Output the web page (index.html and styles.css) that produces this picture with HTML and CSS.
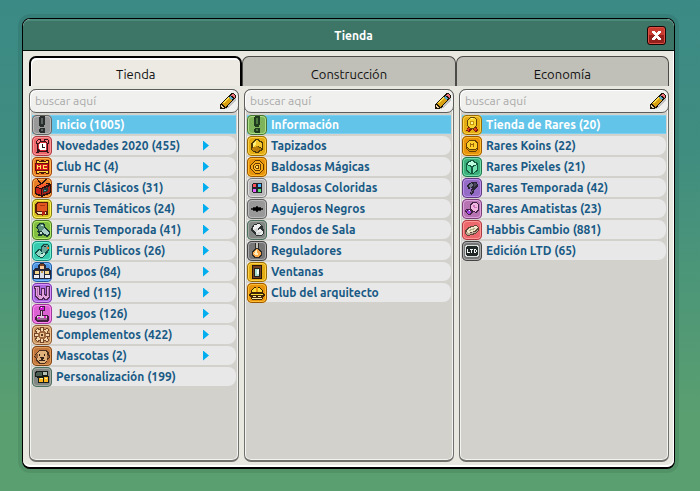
FILE: index.html
```html
<!DOCTYPE html>
<html lang="es">
<head>
<meta charset="utf-8">
<title>Tienda</title>
<meta name="viewport" content="width=device-width, initial-scale=1">
<link rel="stylesheet" href="styles.css">
</head>
<body>
<svg class="sprites" aria-hidden="true">
  <symbol id="bang" viewBox="0 0 20 20"><path d="M8 1h4l1 1v7l-1 3H8L7 9V2zM8 13h4l1 1v3l-1 1H8l-1-1v-3z" fill="var(--ink)"/><path d="M9 3h2v6H9zM9 14h2v2H9z" fill="var(--ink-soft)"/></symbol>
  <symbol id="clock" viewBox="0 0 20 20"><path d="M4 5l2-2h3v2h3V3h3l2 2v3h-1v7l1 2h-2l-1-1H7l-1 1H4l1-2V8H4z" fill="#301417"/><path d="M5 5l1-1h2v1L6 7H5zM13 4h2l1 1v2h-1l-2-2z" fill="#ff7a80"/><path d="M8 6h5l2 2v5l-2 2H8l-2-2V8z" fill="#d22b38"/><path d="M8 7h5l1 1v5l-1 1H8l-1-1V8z" fill="#fff"/><path d="M10 8h1v3h2v1h-3z" fill="#222"/></symbol>
  <symbol id="hc" viewBox="0 0 20 20"><path d="M4 3h3v1h2V3h3v1h2V3h3v4h-1v6h1v4h-3v-1h-2v1H9v-1H7v1H4v-4h1V7H4z" fill="#4b1808"/><path d="M5 4h2v1h7V4h2v2H5zM5 14h11v2h-2v-1H7v1H5z" fill="#ffd83e"/><path d="M3 6h14v8H3z" fill="#6f0910"/><path d="M4 7h12v6H4z" fill="#d3181c"/><path d="M5 8h1v1h2V8h1v4H8v-2H6v2H5zM11 8h4v1h-3v2h3v1h-4z" fill="#ffe65a"/></symbol>
  <symbol id="tv" viewBox="0 0 20 20"><path d="M5 1h1l3 4 5-4h1l-4 5 6-1 2 2v8l-9 4-7-3V9l5-3z" fill="#29100c"/><path d="M4 9l6-3 7 0-8 4z" fill="#f8582e"/><path d="M4 10l5 1v6l-5-2z" fill="#c91f1a"/><path d="M10 11l8-3v6l-8 3z" fill="#a3201a"/><path d="M11 11l5-2v4l-5 2z" fill="#1c3b3a"/><path d="M12 12h2v1h-2z" fill="#56aaa0"/></symbol>
  <symbol id="book" viewBox="0 0 20 20"><path d="M5 3h10l1 1v11l-1 1H5l-2-2V6z" fill="#551e0b"/><path d="M6 4h9v8H5V6z" fill="#e2561f"/><path d="M8 6h5v1H8z" fill="#a83510"/><path d="M5 13h9v2H6z" fill="#f3e5b3"/><path d="M10 12h3v5l-1-1-2 1z" fill="#b02014"/></symbol>
  <symbol id="bird" viewBox="0 0 20 20"><path d="M4 8l2-4 2-1h3l2 2v2l3 2 2 3v3l-3 2-4-2-3 1H6l1-3-3-1 2-2z" fill="#183832"/><path d="M6 6l2-2h2l2 2v2l-3 3-2 0z" fill="#5f8f7d"/><path d="M10 10l2-2 4 3 1 2-2 2-4-2z" fill="#a9cfc8"/><path d="M8 12l2 0v2H8z" fill="#c6dfcf"/><path d="M9 5h2v1H9z" fill="#cef0e3"/></symbol>
  <symbol id="bird-left" viewBox="0 0 20 20"><path d="M3 11l4-3 2 0V6l2-3h4l2 2v4l-1 3-3 2-3 3-4-1-3-3z" fill="#134b45"/><path d="M4 12l3-3 3 2-2 4-2 0z" fill="#8fd4c1"/><path d="M10 7l2-3h3l1 1v3l-3 4-3 0z" fill="#66a99b"/><path d="M8 14l4-2 1 1-3 3H8z" fill="#c2eadd"/><path d="M12 5h2v1h-2z" fill="#1d272b"/><path d="M15 6h2v2h-2z" fill="#f16b31"/></symbol>
  <symbol id="group" viewBox="0 0 20 20"><path d="M8 1h4l2 3v2h3l2 3v8H1V9l2-3h3V4z" fill="#25273b"/><path d="M8 4h4v3H8z" fill="#ffca99"/><path d="M8 2h4v2H8z" fill="#7b4020"/><path d="M8 9h4v7H8z" fill="#d9dde8"/><path d="M3 9h4v3H3zM13 9h4v3h-4z" fill="#f5d88c"/><path d="M2 13h5v3H2zM13 13h5v3h-5z" fill="#eef0f5"/><path d="M9 9h2v2H9z" fill="#c79d4b"/></symbol>
  <symbol id="wired" viewBox="0 0 20 20"><path d="M2 3h6v8h1V5h4v6h1V3h4v11l-3 3h-3l-1-1-1 1H6l-3-3V6H2z" fill="#502855"/><path d="M3 4h4v8h1l1 1 1-1V6h2v6l1 1h2V4h2v9l-3 3h-1l-2-2-2 2H7l-3-3V5H3z" fill="#e4a2dc"/><path d="M5 5h1v8l1 1H6l-1-1zM16 5h1v8h-1z" fill="#b46ab4"/></symbol>
  <symbol id="joystick" viewBox="0 0 20 20"><path d="M8 2h4l1 1v3l-1 1h-1v4h4l2 2v3l-2 2H5l-2-2v-3l2-2h3V7L7 6V3z" fill="#44203f"/><path d="M8 3h4v3H8z" fill="#d018d4"/><path d="M9 3h1v1H9z" fill="#fff"/><path d="M9 7h1v5H9zM5 12h10v2H5z" fill="#e3cae0"/><path d="M5 14h10v2H5z" fill="#94668f"/><path d="M6 13h2v2H6zM12 12h2v2h-2z" fill="#e421ce"/></symbol>
  <symbol id="gear" viewBox="0 0 20 20"><path d="M8 2h4v2l3-1 2 2-1 3h2v4h-2l1 3-2 2-3-1v2H8v-2l-3 1-2-2 1-3H2V8h2L3 5l2-2 3 1z" fill="#744426"/><path d="M9 3h2v3l4-2 1 1-2 4h3v2h-3l2 4-1 1-4-2v3H9v-3l-4 2-1-1 2-4H3V9h3L4 5l1-1 4 2z" fill="#f4d6ad"/><path d="M8 6h4l2 2v4l-2 2H8l-2-2V8z" fill="#9c673d"/><path d="M8 8h4v4H8z" fill="#ebc28e"/><path d="M9 9h2v2H9z" fill="#5b351c"/></symbol>
  <symbol id="dog" viewBox="0 0 20 20"><path d="M7 4h7l3 3 1 4-2 2-1 3-3 2H8l-3-2-1-3-2-2 2-4z" fill="#4c2e1d"/><path d="M7 5h6l2 2v7l-3 3H8l-3-3V7z" fill="#e0b17b"/><path d="M4 8h2v4H4L3 11zM15 8l2 3-1 1h-1z" fill="#98613a"/><path d="M7 8h1v2H7zM12 8h1v2h-1zM8 11h4v1l-1 1v1h2v1H7v-1h2v-1l-1-1z" fill="#342219"/></symbol>
  <symbol id="persona" viewBox="0 0 20 20"><path d="M4 4h11l1 1v4h1v7H6v-5l-3-1V5z" fill="#171d1b"/><path d="M5 5h5v4H4V6z" fill="#4c5f53"/><path d="M11 5h4v3h-4z" fill="#b7c2b7"/><path d="M7 11h4v4H7zM12 10h4v5h-4z" fill="#ffb61e"/><path d="M8 11h3v1H8zM13 11h2v1h-2z" fill="#fff190"/></symbol>
  <symbol id="cube" viewBox="0 0 20 20"><path d="M9 3h2l5 3v8l-5 3H9l-5-3V7z" fill="#4e3909"/><path d="M10 4l5 3v5l-4-2-5 2V7z" fill="#f4c72d"/><path d="M5 12l5-2 5 3-5 3-5-2z" fill="#b87d08"/><path d="M6 7l3-2v4l-3 2z" fill="#fff078"/></symbol>
  <symbol id="rings" viewBox="0 0 20 20"><path d="M8 3h4l5 5v4l-5 5H8l-5-5V8z" fill="#633800"/><path d="M8 4h4l4 4v4l-4 4H8l-4-4V8z" fill="#f7a916"/><path d="M8 6h4l2 2v4l-2 2H8l-2-2V8z" fill="#643900"/><path d="M8 7h4l1 1v4l-1 1H8l-1-1V8z" fill="#ffb829"/><path d="M9 8h2l1 1v2l-1 1H9l-1-1V9z" fill="#714000"/><path d="M9 9h2v2H9z" fill="#ffe064"/></symbol>
  <symbol id="tiles" viewBox="0 0 20 20"><path d="M5 6l1-1h8l1 1v8l-1 1H6l-1-1z" fill="#20232b"/><path d="M6 6h3v3H6z" fill="#ff5157"/><path d="M11 6h3v3h-3z" fill="#47b5ff"/><path d="M6 11h3v3H6z" fill="#e662ff"/><path d="M11 11h3v3h-3z" fill="#57e574"/></symbol>
  <symbol id="hole" viewBox="0 0 20 20"><path d="M9 7h2v1h3v1h2v2h-2v1h-3v1H9v-1H6v-1H4V9h2V8h3z" fill="#2c2c2c"/><path d="M9 8h2v1h3v2h-3v1H9v-1H6V9h3z" fill="#000"/></symbol>
  <symbol id="cloud" viewBox="0 0 20 20"><path d="M7 4l5-1 3 2 2 5v3l-2 3H9l-1-2-3-2-1-3z" fill="#2d3332"/><path d="M7 5l5-1 2 2-4 3-4 1zM8 11l5-2 3 2v2l-2 2h-4z" fill="#eee"/><path d="M6 10l4-2 1 2-2 2zM9 13l6-2v1l-4 3H9z" fill="#d0d5d3"/></symbol>
  <symbol id="bulb" viewBox="0 0 20 20"><path d="M8 2h4v5l3 4v4l-3 2H8l-3-2v-4l3-4z" fill="#302d29"/><path d="M9 2h2v5H9z" fill="#c3c3bb"/><path d="M9 8h2l3 4v2l-3 2H9l-3-2v-2z" fill="#ffa94b"/><path d="M9 9h1l1 5H8l-1-1z" fill="#fff0bd"/></symbol>
  <symbol id="window" viewBox="0 0 20 20"><path d="M5 3h10v14H5z" fill="#241409"/><path d="M6 4h8v12H6z" fill="#74401f"/><path d="M7 6h6v9H7z" fill="#25211c"/><path d="M8 7h4v7H8z" fill="#a5dccf"/><path d="M11 7h1v5h-2v-2z" fill="#eefff9"/></symbol>
  <symbol id="helmet" viewBox="0 0 20 20"><path d="M7 4h6l3 4v2l2 1v2l-2 1v2l-2 1H6l-2-1v-2l-2-1v-2l2-1V8z" fill="#3d2506"/><path d="M7 5h2v4H5V8zM11 5h2l2 3v1h-4zM4 11h12v1H4z" fill="#ffdc36"/><path d="M9 4h2v5H9z" fill="#e99a12"/><path d="M5 15h10v1H5zM6 13h3v1H6zM11 13h3v1h-3z" fill="#ffe9a2"/></symbol>
  <symbol id="medal" viewBox="0 0 20 20"><path d="M6 12h9l1 4-3 1-3-3-3 3-3-1z" fill="#7d170e"/><path d="M6 13h2l-1 3-2-1zM13 13l2 2-2 1-1-3z" fill="#e34216"/><path d="M8 2h4l3 3v5l-3 4H8l-3-4V5z" fill="#674707"/><path d="M8 3h4l2 2v5l-2 3H8l-2-3V5z" fill="#f7d52e"/><path d="M8 6h4v4H8z" fill="#c9960f"/><path d="M9 3h2v1H9zM9 7h2v2H9z" fill="#fff793"/></symbol>
  <symbol id="coin" viewBox="0 0 20 20"><path d="M7 4h6l3 3v6l-3 3H7l-3-3V7z" fill="#674006"/><path d="M7 5h6l2 3v3l-2 2H7l-2-2V8z" fill="#ffd02c"/><path d="M7 14h6l2-2v1l-2 2H7l-2-2v-1z" fill="#d49205"/><path d="M8 7h1v1h2V7h1v4h-1V9H9v2H8z" fill="#9b6408"/></symbol>
  <symbol id="pixel" viewBox="0 0 20 20"><path d="M9 3h2l5 3v8l-5 3H9l-5-3V6z" fill="#145b42"/><path d="M5 7l5-3 5 3-5 2z" fill="#bcffe0"/><path d="M5 8l4 2v6l-4-3z" fill="#53cf9a"/><path d="M11 10l4-2v5l-4 3z" fill="#75e4b2"/></symbol>
  <symbol id="hammer" viewBox="0 0 20 20"><path d="M5 7l5-3h5l1 4-3 3-2 5-2 1-1-1 2-6-4 1z" fill="#282635"/><path d="M6 8l4-3 1 2-3 3z" fill="#777a8e"/><path d="M12 5h2l1 2-3 2z" fill="#4b485c"/><path d="M9 15l1-3 1 0-1 3z" fill="#715a80"/></symbol>
  <symbol id="shell" viewBox="0 0 20 20"><path d="M8 5l2-2h4l3 3v5l-3 3-3-1-2 3H6l-2-2-2-2 3-2 3 0z" fill="#432344"/><path d="M9 6l2-2h3l2 2v4l-2 3-3-1-2-2z" fill="#f0b5e1"/><path d="M11 6h2v2h2v1h-3z" fill="#cc76bd"/><path d="M6 11l3 1v2l-2 1-2-1zM3 11h2v2z" fill="#a345e0"/><path d="M7 11h1v1H7z" fill="#fff"/></symbol>
  <symbol id="bar" viewBox="0 0 20 20"><path d="M3 10l3-3 8-2 3 2v3l-3 4-8 2-3-2z" fill="#61463a"/><path d="M4 11l3-3 7-2 2 1-3 4-7 2z" fill="#f0e5c8"/><path d="M6 10l6-2 1 1-5 2z" fill="#b1ad86"/><path d="M4 12l3 1 6-1 3-3v1l-3 3-7 2-2-1z" fill="#b9a893"/></symbol>
  <symbol id="ltd" viewBox="0 0 20 20"><path d="M4 4h12l1 2v8l-1 2H4l-1-2V6z" fill="#d7e0dd"/><path d="M5 5h10l1 2v6l-1 2H5l-1-2V7z" fill="#202726"/><path d="M5 8h1v3h2v1H5zM8 8h3v1h-1v3H9V9H8zM12 8h2v1h1v2h-1v1h-2zM13 9v2h1V9z" fill="#f3f8f5"/></symbol>
  <symbol id="pencil" viewBox="0 0 18 18"><path d="M6 17l2-4 9-7v3l-8 7-2 1z" fill="#c4c4c4"/><path d="M1 17v-5h1v-1h1v-1h1V9h1V8h1V7h1V6h1V5h1V4h1V3h1V2h1V1h3v1h1v1h1v3h-1v1h-1v1h-1v1h-1v1h-1v1h-1v1h-1v1h-1v1H9v1H8v1H6v1z" fill="#1c1508"/><path d="M3 12v-1h1v-1h1V9h1V8h1V7h1V6h1V5h1v1h1v1h1v1h1v1h-1v1h-1v1h-1v1H9v1H8v1H7v1H6v-1H5v-1H4v-1z" fill="#d9a012"/><path d="M4 11v-1h1V9h1V8h1V7h1V6h1V5h1v2H9v1H8v1H7v1H6v1z" fill="#ffe04a"/><path d="M2 13h1v1h1v1h1v1H3v-1H2z" fill="#f1d4a0"/><path d="M11 4h1v1h1v1h1v1h-1v1h-1V7h-1V6h-1V5h1z" fill="#58a9cc"/><path d="M12 3h1V2h2v1h1v3h-1V5h-1V4h-2z" fill="#ee7078"/></symbol>
</svg>

<main class="window">
  <header class="titlebar">
    <h1>Tienda</h1>
    <button class="close" type="button" aria-label="Cerrar"><svg viewBox="0 0 11 11"><path d="M1 1h3v1h1v1h1V2h1V1h3v2H9v1H8v1H7v1h1v1h1v1h1v2H7V9H6V8H5v1H4v1H1V8h1V7h1V6h1V5H3V4H2V3H1z" fill="#fff"/></svg></button>
  </header>
  <div class="content">
    <nav class="tabs">
      <button class="tab current" type="button">Tienda</button>
      <button class="tab" type="button">Construcción</button>
      <button class="tab" type="button">Economía</button>
    </nav>
    <div class="columns">
      <section class="panel">
        <label class="search"><input type="text" placeholder="buscar aquí" aria-label="Buscar en Tienda"><svg><use href="#pencil"/></svg></label>
        <ul>
          <li><button class="row selected" type="button"><svg class="icon gray"><use href="#bang"/></svg>Inicio (1005)</button></li>
          <li><button class="row more" type="button"><svg class="icon red"><use href="#clock"/></svg>Novedades 2020 (455)</button></li>
          <li><button class="row more" type="button"><svg class="icon orange"><use href="#hc"/></svg>Club HC (4)</button></li>
          <li><button class="row more" type="button"><svg class="icon orange"><use href="#tv"/></svg>Furnis Clásicos (31)</button></li>
          <li><button class="row more" type="button"><svg class="icon yellow"><use href="#book"/></svg>Furnis Temáticos (24)</button></li>
          <li><button class="row more" type="button"><svg class="icon lime"><use href="#bird"/></svg>Furnis Temporada (41)</button></li>
          <li><button class="row more" type="button"><svg class="icon aqua"><use href="#bird-left"/></svg>Furnis Publicos (26)</button></li>
          <li><button class="row more" type="button"><svg class="icon blue"><use href="#group"/></svg>Grupos (84)</button></li>
          <li><button class="row more" type="button"><svg class="icon violet"><use href="#wired"/></svg>Wired (115)</button></li>
          <li><button class="row more" type="button"><svg class="icon pink"><use href="#joystick"/></svg>Juegos (126)</button></li>
          <li><button class="row more" type="button"><svg class="icon tan"><use href="#gear"/></svg>Complementos (422)</button></li>
          <li><button class="row more" type="button"><svg class="icon brown"><use href="#dog"/></svg>Mascotas (2)</button></li>
          <li><button class="row" type="button"><svg class="icon sage"><use href="#persona"/></svg>Personalización (199)</button></li>
        </ul>
      </section>
      <section class="panel">
        <label class="search"><input type="text" placeholder="buscar aquí" aria-label="Buscar en Construcción"><svg><use href="#pencil"/></svg></label>
        <ul>
          <li><button class="row selected" type="button"><svg class="icon green"><use href="#bang"/></svg>Información</button></li>
          <li><button class="row" type="button"><svg class="icon gold"><use href="#cube"/></svg>Tapizados</button></li>
          <li><button class="row" type="button"><svg class="icon amber"><use href="#rings"/></svg>Baldosas Mágicas</button></li>
          <li><button class="row" type="button"><svg class="icon silver"><use href="#tiles"/></svg>Baldosas Coloridas</button></li>
          <li><button class="row" type="button"><svg class="icon gray"><use href="#hole"/></svg>Agujeros Negros</button></li>
          <li><button class="row" type="button"><svg class="icon sage"><use href="#cloud"/></svg>Fondos de Sala</button></li>
          <li><button class="row" type="button"><svg class="icon dark"><use href="#bulb"/></svg>Reguladores</button></li>
          <li><button class="row" type="button"><svg class="icon gold"><use href="#window"/></svg>Ventanas</button></li>
          <li><button class="row" type="button"><svg class="icon amber"><use href="#helmet"/></svg>Club del arquitecto</button></li>
        </ul>
      </section>
      <section class="panel">
        <label class="search"><input type="text" placeholder="buscar aquí" aria-label="Buscar en Economía"><svg><use href="#pencil"/></svg></label>
        <ul>
          <li><button class="row selected" type="button"><svg class="icon gold"><use href="#medal"/></svg>Tienda de Rares (20)</button></li>
          <li><button class="row" type="button"><svg class="icon amber"><use href="#coin"/></svg>Rares Koins (22)</button></li>
          <li><button class="row" type="button"><svg class="icon emerald"><use href="#pixel"/></svg>Rares Pixeles (21)</button></li>
          <li><button class="row" type="button"><svg class="icon purple"><use href="#hammer"/></svg>Rares Temporada (42)</button></li>
          <li><button class="row" type="button"><svg class="icon mauve"><use href="#shell"/></svg>Rares Amatistas (23)</button></li>
          <li><button class="row" type="button"><svg class="icon red"><use href="#bar"/></svg>Habbis Cambio (881)</button></li>
          <li><button class="row" type="button"><svg class="icon dark"><use href="#ltd"/></svg>Edición LTD (65)</button></li>
        </ul>
      </section>
    </div>
  </div>
</main>
</body>
</html>
```
FILE: styles.css
```css
* { box-sizing: border-box; }

body {
  display: flex;
  min-height: 100vh;
  margin: 0;
  padding: 18px 25px 22px 22px;
  background: linear-gradient(#3b8a85, #3f8d80 30%, #5a9f70 85%);
  font: 12px/16px Ubuntu, "Noto Sans", sans-serif;
}

button, input { font: inherit; }
button { padding: 0; border: 0; cursor: pointer; }
svg { flex: none; shape-rendering: crispEdges; }
.sprites { position: absolute; width: 0; height: 0; }

.window {
  display: flex;
  flex: 1;
  flex-direction: column;
  min-width: 0;
  border: 1px solid #000;
  border-bottom-width: 2px;
  border-radius: 8px;
  background: #e9e8e0;
  box-shadow: 0 0 0 4px rgb(0 0 0 / 8%);
  overflow: hidden;
}

.titlebar {
  display: grid;
  grid-template-columns: 1fr auto 1fr;
  align-items: center;
  height: 32px;
  padding: 0 8px 0 18px;
  border-top: 2px solid #4c8b7b;
  border-bottom: 1px solid #00100c;
  border-radius: 7px 7px 0 0;
  background: #3d7567;
  color: #fff;
}

h1 { grid-column: 2; margin: 0; font-size: 12px; line-height: 16px; }

.close {
  display: grid;
  grid-column: 3;
  justify-self: end;
  place-items: center;
  width: 19px;
  height: 19px;
  border: 1px solid #190504;
  border-radius: 3px;
  background: linear-gradient(#c83c2f 50%, #94211b 50%);
  box-shadow: inset 0 0 0 1px #dc5145;
}
.close svg { width: 11px; height: 11px; }

.content {
  display: flex;
  flex: 1;
  flex-direction: column;
  gap: 3px;
  padding: 5px 4px 3px 6px;
  border: solid #fff;
  border-width: 0 1px 2px 0;
  border-radius: 0 0 7px 7px;
}

.tabs { display: grid; grid-template-columns: repeat(3, 1fr); }
.tab {
  height: 30px;
  padding-top: 4px;
  border: 1px solid #4b4b48;
  border-bottom: 0;
  border-radius: 7px 7px 0 0;
  background: #c1c0b8;
  color: #111;
  font-size: 13px;
}
.tab.current {
  border: 2px solid #000;
  border-bottom: 0;
  background: #eceae2;
  box-shadow: inset 1px 2px #fff;
}

.columns {
  display: grid;
  flex: 1;
  grid-template-columns: repeat(3, 1fr);
  gap: 5px;
}

.panel {
  border: 1px solid #70706d;
  border-bottom-width: 2px;
  border-radius: 7px;
  background: #d2d1cc;
  box-shadow: inset 0 0 0 1px #f3f3f1;
}

.search {
  display: flex;
  align-items: center;
  height: 24px;
  margin: -1px -1px 0;
  padding: 0 1px 0 5px;
  border: 1px solid #5c5c5a;
  border-radius: 7px;
  background: #f0f0ee;
  box-shadow: inset 1px 1px #fff;
}
.search input {
  flex: 1;
  min-width: 0;
  padding: 0;
  border: 0;
  outline: 0;
  background: none;
  color: #333;
}
.search input::placeholder { color: #aaa; opacity: 1; }
.search svg { width: 18px; height: 18px; }

ul {
  display: grid;
  gap: 2px;
  margin: 0;
  padding: 2px;
  list-style: none;
}

.row {
  display: flex;
  align-items: center;
  gap: 4px;
  width: 100%;
  height: 19px;
  border-radius: 0 8px 8px 0;
  background: #e8e8e8;
  color: #185a85;
  font-weight: 700;
  white-space: nowrap;
}
.row.selected {
  border: solid #7dcff0;
  border-width: 1px 0;
  border-radius: 0;
  background: #62c4e9;
  color: #fff;
}
.row.more::after {
  width: 6px;
  height: 10px;
  margin: 0 27px 0 auto;
  background: #00aeef;
  clip-path: polygon(0 0, 100% 50%, 0 100%);
  content: "";
}

.icon {
  --edge: #555;
  --light: #bbb;
  --fill: #999;
  --ink: #292d2c;
  --ink-soft: #5d6664;
  width: 20px;
  height: 20px;
  border-radius: 5px;
  background: var(--fill);
  box-shadow: inset 0 0 0 1px var(--edge), inset 0 0 0 2px var(--light);
}
.gray { --edge: #626262; --light: #bbb; --fill: #999; }
.silver { --edge: #777; --light: #ddd; --fill: #b9b7b8; }
.dark { --edge: #444; --light: #aaa; --fill: #777; }
.sage { --edge: #49705d; --light: #a5aaa5; --fill: #838783; }
.red { --edge: #a93841; --light: #ff9797; --fill: #ec686d; }
.orange { --edge: #9c4514; --light: #ffb34f; --fill: #ea7c26; }
.yellow { --edge: #827a15; --light: #fff251; --fill: #d4c026; }
.lime { --edge: #47732b; --light: #b4ec66; --fill: #81bd40; }
.green { --edge: #477235; --light: #addf86; --fill: #7eb25b; --ink: #203b1e; --ink-soft: #4b7a40; }
.aqua { --edge: #168879; --light: #72f0d3; --fill: #36caaf; }
.blue { --edge: #245c9e; --light: #79baff; --fill: #4b91de; }
.violet { --edge: #7839a4; --light: #d794ff; --fill: #aa66df; }
.purple { --edge: #5d397e; --light: #bd91eb; --fill: #946bc5; }
.pink { --edge: #9d3898; --light: #ff8bf3; --fill: #dc61d2; }
.mauve { --edge: #793e75; --light: #dfa1dd; --fill: #b675b2; }
.tan { --edge: #8c5933; --light: #edc394; --fill: #c7935e; }
.brown { --edge: #774317; --light: #e39c5b; --fill: #c1773b; }
.gold { --edge: #986b05; --light: #ffd248; --fill: #e4ac14; }
.amber { --edge: #985600; --light: #ffbd31; --fill: #e8930c; }
.emerald { --edge: #1c734e; --light: #72dba8; --fill: #3caf7a; }
```
